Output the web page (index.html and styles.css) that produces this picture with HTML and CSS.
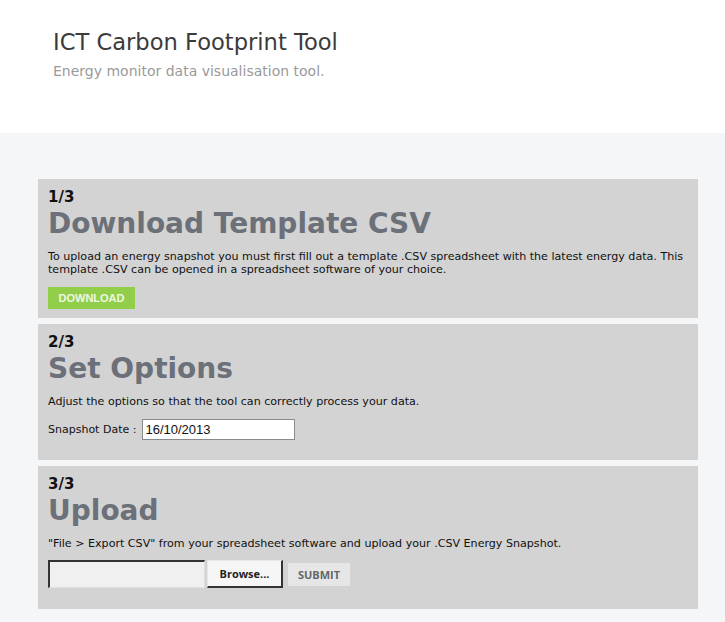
FILE: index.html
```
<!DOCTYPE html>
<html>
<head>
<meta charset="utf-8">
<link rel="stylesheet" href="styles.css">
</head>
<body>
<header class="site-header">
  <h1 class="site-title">ICT Carbon Footprint Tool</h1>
  <p class="site-sub">Energy monitor data visualisation tool.</p>
</header>
<main class="content">
  <section class="step step-download">
    <div class="step-num">1/3</div>
    <h2 class="step-title">Download Template CSV</h2>
    <p class="step-text">To upload an energy snapshot you must first fill out a template .CSV spreadsheet with the latest energy data. This template .CSV can be opened in a spreadsheet software of your choice.</p>
    <button class="btn-download">DOWNLOAD</button>
  </section>
  <section class="step step-options">
    <div class="step-num">2/3</div>
    <h2 class="step-title">Set Options</h2>
    <p class="step-text">Adjust the options so that the tool can correctly process your data.</p>
    <div class="field">
      <label class="field-label">Snapshot Date :</label>
      <input class="date-input" type="text" value="16/10/2013">
    </div>
  </section>
  <section class="step step-upload">
    <div class="step-num">3/3</div>
    <h2 class="step-title">Upload</h2>
    <p class="step-text">"File &gt; Export CSV" from your spreadsheet software and upload your .CSV Energy Snapshot.</p>
    <div class="upload-row">
      <div class="file-box"></div>
      <button class="btn-browse">Browse...</button>
      <button class="btn-submit">SUBMIT</button>
    </div>
  </section>
</main>
</body>
</html>
```
FILE: styles.css
```
html, body {
  margin: 0;
  padding: 0;
}
body {
  background: #f5f6f8;
  font-family: "DejaVu Sans", Verdana, sans-serif;
  width: 725px;
  height: 622px;
  overflow: hidden;
}
.site-header {
  background: #ffffff;
  height: 133px;
  padding: 29px 0 0 53px;
  box-sizing: border-box;
}
.site-title {
  margin: 0;
  font-weight: normal;
  font-size: 22.6px;
  line-height: 26px;
  color: #3b3b3b;
}
.site-sub {
  margin: 8px 0 0 0;
  font-size: 14px;
  line-height: 17px;
  color: #9a9a9a;
}
.content {
  padding: 46px 0 0 38px;
}
.step {
  width: 660px;
  background: #d3d3d3;
  box-sizing: border-box;
  padding: 10px 10px 10px 10px;
  margin-bottom: 6px;
}
.step-download {
  padding-bottom: 9px;
}
.step-options {
  padding-bottom: 20px;
}
.step-upload {
  padding-bottom: 21px;
}
.step-num {
  font-weight: bold;
  font-size: 15px;
  line-height: 16px;
  color: #111;
}
.step-title {
  margin: 2px 0 0 0;
  font-size: 28px;
  line-height: 34px;
  color: #6b7079;
}
.step-text {
  margin: 9px 0 0 0;
  font-size: 11.1px;
  line-height: 13px;
  color: #111;
}
.btn-download {
  display: block;
  margin: 11px 0 0 0;
  width: 87px;
  height: 22px;
  background: #93ce4a;
  border: 0;
  color: #eef7e2;
  font-family: "Liberation Sans", Arial, sans-serif;
  font-weight: bold;
  font-size: 11px;
  padding: 0;
}
.field {
  display: flex;
  align-items: center;
  margin-top: 11px;
  height: 21px;
}
.field-label {
  font-size: 11px;
  color: #111;
  margin-right: 6px;
}
.date-input {
  width: 153px;
  height: 21px;
  box-sizing: border-box;
  border: 1px solid #8a8a8a;
  background: #fff;
  font-family: "Liberation Sans", Arial, sans-serif;
  font-size: 13px;
  padding: 0 2px;
  color: #111;
}
.upload-row {
  display: flex;
  align-items: center;
  margin-top: 10px;
}
.file-box {
  width: 157px;
  height: 28px;
  box-sizing: border-box;
  background: #f0f0f0;
  border-top: 2px solid #333;
  border-left: 2px solid #333;
  border-right: 1px solid #e0e0e0;
  border-bottom: 1px solid #e0e0e0;
}
.btn-browse {
  margin-left: 2px;
  width: 76px;
  height: 28px;
  box-sizing: border-box;
  background: #f6f6f6;
  border: 0;
  border-right: 2px solid #333;
  border-bottom: 2px solid #333;
  border-top: 1px solid #e8e8e8;
  border-left: 1px solid #e8e8e8;
  font-family: "Open Sans", sans-serif;
  font-weight: bold;
  font-size: 11px;
  color: #222;
  padding: 0;
}
.btn-submit {
  margin-left: 5px;
  width: 62px;
  height: 23px;
  background: #e6e6e6;
  border: 0;
  font-family: "Open Sans", sans-serif;
  font-weight: bold;
  font-size: 11px;
  color: #666;
  padding: 0;
}
```
